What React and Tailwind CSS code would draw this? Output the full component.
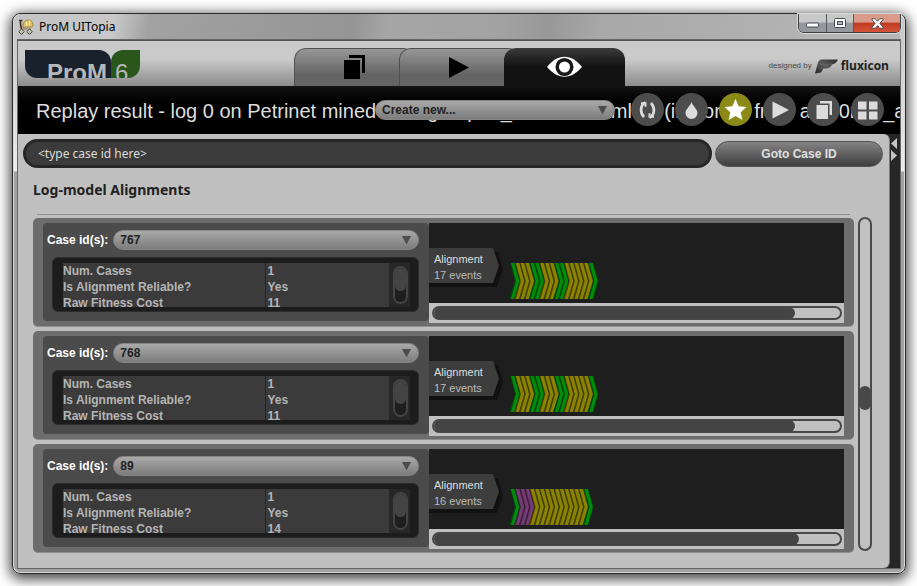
import React from "react";

const CASES = [
  { id: "767", cost: "11", events: 17, colors: "gyyyggyyyggyyyyyg", scroll: "w-[89%]" },
  { id: "768", cost: "11", events: 17, colors: "gyyyggyyyggyyyyyg", scroll: "w-[89%]" },
  { id: "89", cost: "14", events: 16, colors: "gpppyyyyyyyyyyyg", scroll: "w-[90%]" },
];

const FILL = { g: "#008c0c", y: "#8a8400", p: "#743c74" };
const EDGE = { g: "#004a08", y: "#4a4300", p: "#41213f" };

function WindowControls() {
  return (
    <div className="-mr-px flex h-[19px] rounded-b-md border border-t-0 border-[#3c3f44] text-white shadow-[0_0_0_1px_#d8d8d8]">
      <button aria-label="Minimize" className="flex w-7 items-center justify-center rounded-bl border-r border-[#55585e] bg-linear-to-b from-[#c8c8c8] from-45% to-[#95989d] to-50%">
        <svg width="13" height="6" viewBox="0 0 13 6" className="mt-1">
          <rect x=".5" y="1" width="12" height="4" rx="1" fill="#fff" stroke="#45494f" />
        </svg>
      </button>
      <button aria-label="Maximize" className="flex w-[27px] items-center justify-center border-r border-[#55585e] bg-linear-to-b from-[#c8c8c8] from-45% to-[#95989d] to-50%">
        <svg width="12" height="10" viewBox="0 0 12 10">
          <rect x=".5" y=".5" width="11" height="9" rx="1" fill="#fff" stroke="#45494f" />
          <rect x="3.5" y="3.5" width="5" height="3" fill="#b9bcc0" stroke="#45494f" />
        </svg>
      </button>
      <button aria-label="Close" className="flex w-[46px] items-center justify-center rounded-br bg-linear-to-b from-[#d99a8a] from-45% via-[#bf3a20] via-50% to-[#d4553a]">
        <svg width="13" height="11" viewBox="0 0 13 11">
          <path d="M1 .8h3.4l2.1 2.5L8.6.8H12v1L8.8 5.4 12 9.2v1H8.6L6.5 7.6l-2.1 2.6H1v-1l3.2-3.8L1 1.8z" fill="#fff" stroke="#45494f" strokeWidth=".9" />
        </svg>
      </button>
    </div>
  );
}

function AppIcon() {
  return (
    <svg width="16" height="16" viewBox="0 0 16 16">
      <path d="M1 1.500h3.500M2.500 1v4l1 5" stroke="#3b3423" strokeWidth="1.600" fill="none" />
      <path d="M5 6.500C5 3 7.500 1 10.500 1S15 3.500 15 6.500L14 8H9l-4 .5z" fill="#e3c163" stroke="#7d6a39" strokeWidth=".7" />
      <path d="M8 2.500 9 7M11.500 1.500v5" stroke="#fff0b0" strokeWidth="1" />
      <path d="M4 9h9v2H4z" fill="#a59a7a" />
      <g fill="#d6d3bf" stroke="#3c3b33" strokeWidth="1">
        <path d="m3.500 10 2.700 2.700-2.700 2.700L.8 12.700zM11.500 10l2.700 2.700-2.700 2.700-2.700-2.700z" />
      </g>
      <path d="M3 12.700h1M11 12.700h1" stroke="#c9b400" strokeWidth="1.500" />
    </svg>
  );
}

function PromLogo() {
  return (
    <div className="mt-[9px] ml-[7px] flex h-7 w-[115px] overflow-hidden rounded-bl-xl rounded-br-xl text-2xl leading-none text-[#b8b8b8]">
      <div className="w-[86px] rounded-tr-xl bg-[#19212d] pt-[11px] pr-1 text-right font-bold">ProM</div>
      <div className="flex-1 rounded-tl-xl bg-[#29571b] pt-[11px] pl-1">6</div>
    </div>
  );
}

const TAB_OFF = "-mr-4 flex h-[38px] w-[121px] items-start justify-center rounded-t-xl border border-b-0 border-[#505050] bg-linear-to-b from-[#979797] to-[#646464] to-70%";

function Tabs() {
  return (
    <nav className="mt-[7px] flex self-start">
      <button aria-label="Workspace" className={TAB_OFF + " pt-1.5"}>
        <svg width="21" height="24" viewBox="0 0 21 24">
          <path d="M0 5h16v19H0zM5 0h16v18h-3V3H5z" fill="#000" />
        </svg>
      </button>
      <button aria-label="Actions" className={TAB_OFF + " pt-2"}>
        <svg width="20" height="22" viewBox="0 0 20 22">
          <path d="M0 0 20 10.500 0 21z" fill="#000" />
        </svg>
      </button>
      <button aria-label="Views" className="z-10 flex h-[38px] w-[121px] items-start justify-center rounded-t-xl bg-linear-to-b from-[#3b3b3b] to-[#121212] to-50% pt-2">
        <svg width="35" height="22" viewBox="0 0 36 22">
          <path d="M0 11C6 4 11 .5 18 .5S30 4 36 11c-6 6.500-11 10-18 10S6 17.500 0 11z" fill="#fff" />
          <circle cx="18" cy="11" r="7.500" fill="#fff" stroke="#181818" strokeWidth="3.600" />
        </svg>
      </button>
    </nav>
  );
}

function Fluxicon() {
  return (
    <div className="mt-[5px] mr-[11px] flex items-center">
      <span className="text-[8px] text-[#4a4a4a]">designed by</span>
      <svg width="25" height="17" viewBox="0 0 25 17" className="mx-0.5">
        <defs>
          <linearGradient id="flux" x1="0" x2="1" y1="1" y2="0">
            <stop offset="0" stopColor="#222" />
            <stop offset=".5" stopColor="#5c5c5c" />
            <stop offset="1" stopColor="#2b2b2b" />
          </linearGradient>
        </defs>
        <path d="M4 4.500C5 2 6.500 1.500 9 1.500h15c-1.500 3-3 4.500-6 5-1 2.500-3 4-6 4H9.500L7 14.500 1 15.500z" fill="url(#flux)" />
        <path d="M6 6.300h12M5 10.300h5" stroke="#777" strokeWidth=".5" />
      </svg>
      <span className="font-['Open_Sans',sans-serif] text-xs leading-4 font-bold text-[#222]">fluxicon</span>
    </div>
  );
}

const TOOL_ICONS = [
  ["Refresh", <g key="r" fill="none" stroke="#dcdcdc" strokeWidth="2.800"><path d="M14.500 9.500c-5 2-6 9.500-1.500 14.500M18.500 24.500c5-2 6-9.500 1.500-14.500" /><path d="M10 10.200h4.500v3.500M23 23.800h-4.500v-3.500" strokeWidth="2" /></g>],
  ["Clean", <path key="d" d="M16.500 8.500c.5 4 6 7.500 6 11.500a6 6 0 0 1-12 0c0-4 5.500-7.500 6-11.500z" fill="#dcdcdc" />],
  ["Favorite", <path key="s" d="m16.500 6 3.200 7.200 7.800.8-5.800 5.200 1.700 7.800-6.900-4-6.900 4 1.700-7.800L5.500 14l7.800-.8z" fill="#fff" />],
  ["Run", <path key="p" d="M9.500 8.500 26 17 9.500 25.500z" fill="#dcdcdc" />],
  ["Show in workspace", <path key="c" d="M9.500 12H21v14H9.500zM13 8h12v14h-2.500V10.500H13z" fill="#dcdcdc" />],
  ["Show all", <path key="g" d="M7 8.500h8.500v8H7zM18 8.500h8.500v8H18zM7 18.500h8.500v8H7zM18 18.500h8.500v8H18z" fill="#dcdcdc" />],
];

function Arrow() {
  return (
    <svg width="10" height="9" viewBox="0 0 10 9" className="pointer-events-none absolute top-1.5 right-[7px]">
      <path d="M0 0h9L4.500 8.500z" fill="#4c4c4c" />
    </svg>
  );
}

const PILL = "block h-5 w-full appearance-none rounded-full border border-[#858585] bg-linear-to-b from-[#a9a9a9] to-[#7c7c7c] pl-1.5 text-xs font-bold text-[#222]";

function TitleBar() {
  return (
    <div className="relative h-12 shrink-0 overflow-hidden bg-linear-to-b from-[#141414] to-black to-60%">
      <h1 className="overflow-hidden pl-[18px] text-xl leading-[50px] whitespace-nowrap text-[#dedede]">
        Replay result - log 0 on Petrinet mined from group15_a32f0n00.xml.gz (imported from a32f0n00_a
      </h1>
      <div className="absolute top-[7px] right-4 flex items-start gap-4">
        <div className="relative mt-[7px] w-60">
          <select aria-label="Create new" className={PILL}>
            <option>Create new...</option>
          </select>
          <Arrow />
        </div>
        <div className="flex gap-[11px]">
          {TOOL_ICONS.map(([name, shape]) => (
            <button key={name} aria-label={name} className={"size-[33px] rounded-full " + (name === "Favorite" ? "bg-[#8b8a16]" : "bg-[#4c4c4c]")}>
              <svg width="33" height="33" viewBox="0 0 33 33">{shape}</svg>
            </button>
          ))}
        </div>
      </div>
    </div>
  );
}

function Trace({ colors }) {
  return (
    <svg width="100" height="36" viewBox="0 0 100 36" className="mb-1 ml-1.5 self-end">
      {colors.split("").map((c, i) => {
        const x = i * 4.9 + 1;
        return (
          <g key={i}>
            <path d={`M${x} 0h5l5 18-5 18h-6l6-18z`} fill={EDGE[c]} />
            <path d={`M${x + 1} 0h3.2l5 18-5 18h-3.2l5-18z`} fill={FILL[c]} />
          </g>
        );
      })}
    </svg>
  );
}

function CaseCard({ item }) {
  const rows = [
    ["Num. Cases", "1"],
    ["Is Alignment Reliable?", "Yes"],
    ["Raw Fitness Cost", item.cost],
  ];
  return (
    <article className="flex rounded-[5px] border-b border-[#8f8f8f] bg-[#6d6d6d] px-[10px] pt-[5px] pb-[3px]">
      <div className="mb-0.5 w-[386px] shrink-0 rounded-[4px] bg-[#4b4b4b] pt-[7px] pr-[10px] pb-[9px]">
        <div className="flex items-center gap-[5px] pl-1">
          <label htmlFor={"case-" + item.id} className="shrink-0 text-xs font-bold text-white">Case id(s):</label>
          <div className="relative flex-1">
            <select id={"case-" + item.id} className={PILL}>
              <option>{item.id}</option>
            </select>
            <Arrow />
          </div>
        </div>
        <div className="mt-[7px] ml-[9px] flex h-[55px] rounded-md border border-[#2c2c2c] bg-[#1c1c1c] pt-[5px] pr-[8px] pb-1 pl-[10px]">
          <div className="flex-1 overflow-hidden bg-[#3b3b3b]">
            <table className="w-full table-fixed border-collapse text-xs font-bold text-[#b5b5b5]">
              <tbody>
                {rows.map(([k, v]) => (
                  <tr key={k}>
                    <th scope="row" className="w-[202px] border-r border-[#262626] p-0 text-left leading-4">{k}</th>
                    <td className="p-0 pl-0.5 leading-4">{v}</td>
                  </tr>
                ))}
              </tbody>
            </table>
          </div>
          <div className="w-[21px] bg-[#272727] px-1 py-[3px]">
            <div className="h-[38px] w-[15px] rounded-full border-2 border-[#444] bg-[#1e1e1e]">
              <div className="h-[23px] rounded-full bg-[#444]" />
            </div>
          </div>
        </div>
      </div>
      <div className="min-w-0 flex-1">
        <div className="flex h-20 bg-[#1e1e1e]">
          <div className="relative mt-[25px] h-[39px] w-[74px] shrink-0">
            <svg width="74" height="39" viewBox="0 0 74 39" className="absolute inset-0">
              <path d="M0 4h69l5 17-6 18H0z" fill="#111" />
              <path d="M0 0h64l6 17.500L64 35H0z" fill="#3d3d3d" />
            </svg>
            <p className="relative pt-[3px] pl-[5px] text-[11px] leading-4 text-[#ddd]">
              Alignment
              <br />
              <span className="text-[#bbb]">{item.events} events</span>
            </p>
          </div>
          <Trace colors={item.colors} />
        </div>
        <div className="h-5 bg-[#c0c0c0] py-[3px] pr-[2px] pl-[3px]">
          <div className="h-[14px] rounded-full border-2 border-[#484848] bg-[#c0c0c0]">
            <div className={"-my-px h-3 rounded-full bg-[#444] " + item.scroll} />
          </div>
        </div>
      </div>
    </article>
  );
}

export default function App() {
  return (
    <div className="h-screen overflow-hidden bg-white pt-[13px] pr-[11px] pb-3 pl-3 font-['Liberation_Sans',sans-serif]">
      <div className="flex h-full flex-col rounded-lg border border-[#2a2a2a] bg-[linear-gradient(#c4c4c4,#ececec_157px,#a3a3a3_158px)] px-[5px] pb-[5px] shadow-[0_3px_13px_2px_rgba(0,0,0,0.75),inset_0_0_0_1px_#d9d9d9]">
        <div className="flex h-[26px] shrink-0 items-start justify-between bg-[linear-gradient(100deg,#c4c4c4,#c8c8c8_11%,#a2a2a2_15%,#959595_38%,#a6a6a6_42%,#a2a2a2_55%,#989898_60%,#a8a8a8_66%,#b8b8b8)]">
          <div className="flex items-center gap-[5px] pt-[5px] font-['Noto_Sans',sans-serif] text-xs leading-4 text-black">
            <AppIcon />
            ProM UITopia
          </div>
          <WindowControls />
        </div>
        <div className="flex min-h-0 flex-1 flex-col shadow-[0_0_0_1px_#666]">
          <header className="flex h-[46px] shrink-0 items-center justify-between border-t border-[#555] bg-linear-to-b from-[#cacaca] from-40% to-[#8c8c8c]">
            <div className="flex flex-1 self-start"><PromLogo /></div>
            <Tabs />
            <div className="flex flex-1 justify-end"><Fluxicon /></div>
          </header>
          <TitleBar />
          <div className="flex min-h-0 flex-1 bg-[#262626]">
            <main className="flex min-w-0 flex-1 flex-col rounded-r-md border-r border-[#777] bg-[#c0c0c0] pt-[5px] pr-1.5 pl-[5px]">
              <div className="flex items-center gap-[3px]">
                <input aria-label="Case id" defaultValue="<type case id here>" className="h-[29px] min-w-0 flex-1 rounded-full border-[3px] border-[#262626] bg-[#3b3b3b] pl-3 font-['Noto_Sans',sans-serif] text-xs text-[#dcdcdc]" />
                <button className="h-[26px] w-[168px] rounded-full border border-[#555] bg-linear-to-b from-[#858585] to-[#3e3e3e] text-xs font-bold text-[#e0e0e0]">Goto Case ID</button>
              </div>
              <h2 className="mt-3 pl-[10px] font-['Noto_Sans',sans-serif] text-sm leading-5 font-bold text-[#222]">Log-model Alignments</h2>
              <div className="mt-[14px] flex gap-1 pl-[10px]">
                <div className="min-w-0 flex-1">
                  <div className="mx-1 mb-[3px] h-px bg-[#909090]" />
                  <div className="flex flex-col gap-1">
                    {CASES.map((c) => <CaseCard key={c.id} item={c} />)}
                  </div>
                </div>
                <div className="mt-[3px] mr-[11px] mb-0.5 w-[14px] rounded-full border-2 border-[#4a4a4a] pt-[167px]">
                  <div className="-mx-px h-6 rounded-full bg-[#484848]" />
                </div>
              </div>
            </main>
            <aside className="w-[10px] pt-1">
              <svg width="9" height="24" viewBox="0 0 9 24">
                <path d="M7 0v11L1 5.500zM1 12v11l6-5.500z" fill="#c4c4c4" />
              </svg>
            </aside>
          </div>
        </div>
      </div>
    </div>
  );
}
